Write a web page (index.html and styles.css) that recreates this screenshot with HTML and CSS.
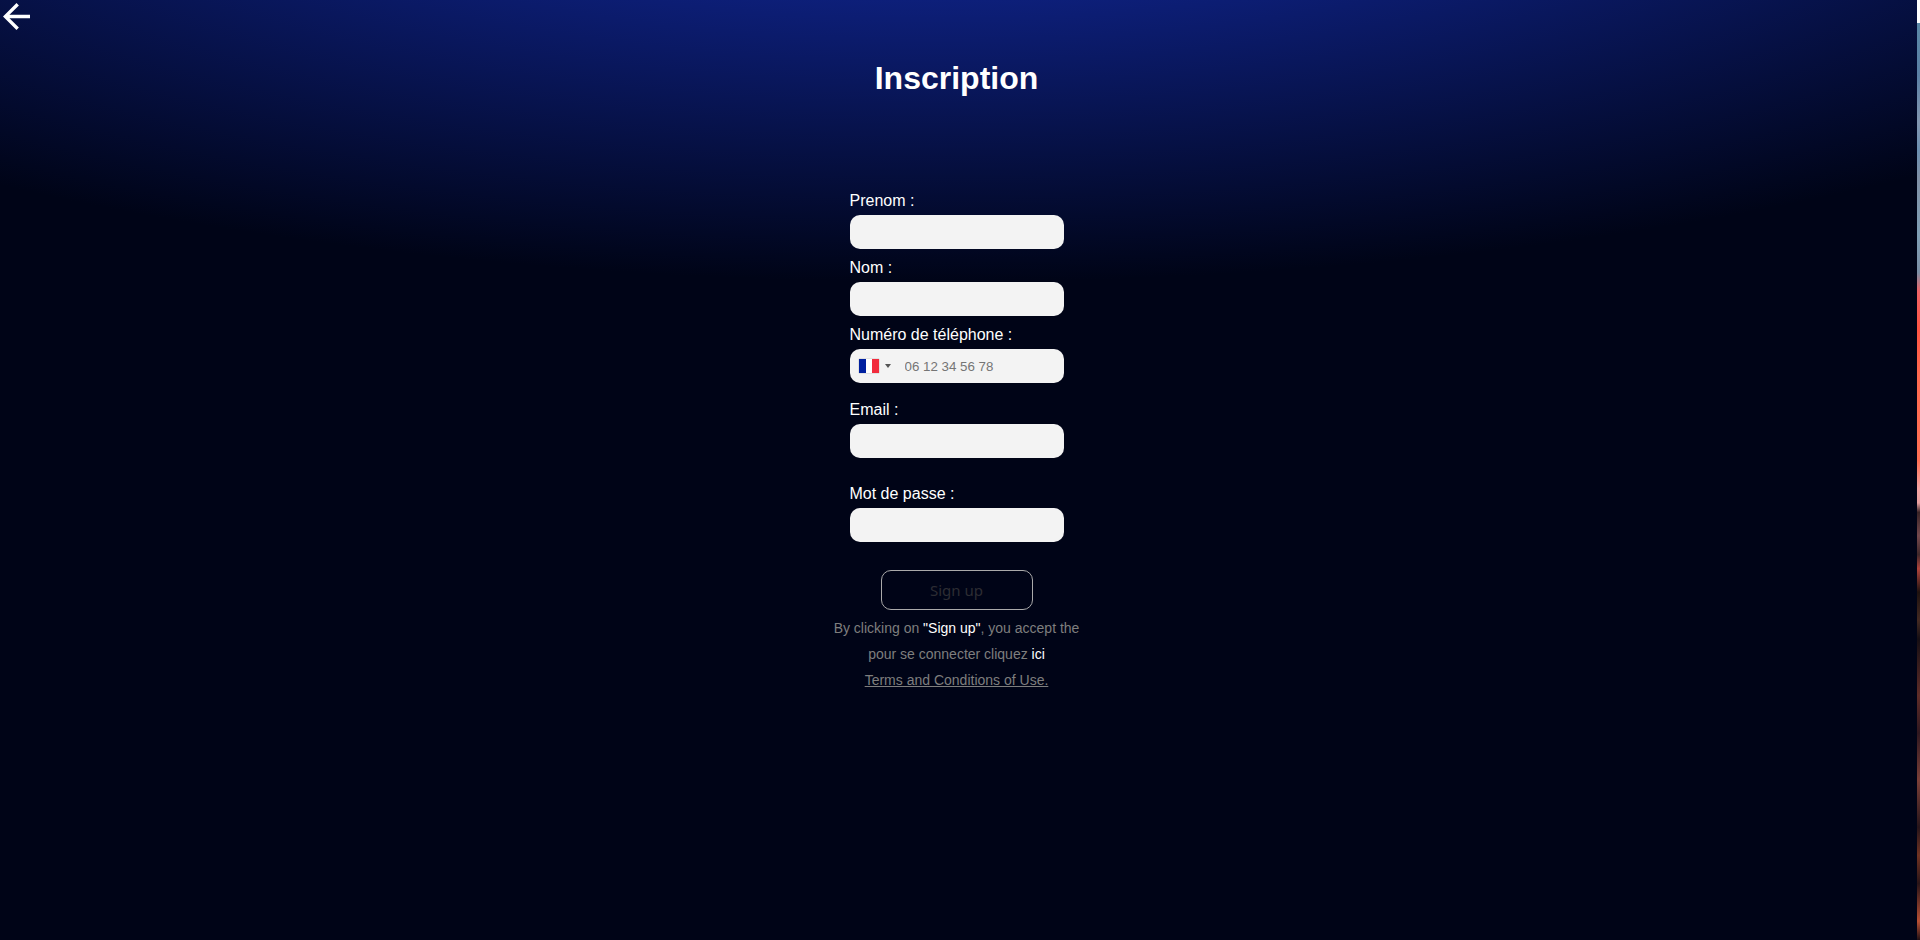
FILE: index.html
```html
<!DOCTYPE html>
<html lang="fr">
<head>
  <meta charset="utf-8">
  <title>Inscription</title>
  <link rel="stylesheet" href="styles.css">
</head>
<body>
  <div class="layout">
    <div class="panel">
      <a class="back" href="#" aria-label="Retour">
        <svg class="back-icon" viewBox="4 4 16 16" aria-hidden="true"><path fill="#fff" d="M20 11H7.83l5.59-5.59L12 4l-8 8 8 8 1.41-1.41L7.83 13H20z"/></svg>
      </a>
      <main class="content">
        <h1 class="title">Inscription</h1>
        <form class="form">
          <div class="field">
            <label class="label" for="firstname">Prenom :</label>
            <input class="input" id="firstname" type="text">
          </div>
          <div class="field">
            <label class="label" for="lastname">Nom :</label>
            <input class="input" id="lastname" type="text">
          </div>
          <div class="field field-phone">
            <label class="label" for="phone">Numéro de téléphone :</label>
            <div class="phone">
              <button class="country" type="button" aria-label="France">
                <span class="flag"></span>
                <span class="caret"></span>
              </button>
              <input class="phone-input" id="phone" type="tel" placeholder="06 12 34 56 78">
            </div>
          </div>
          <div class="field field-email">
            <label class="label" for="email">Email :</label>
            <input class="input" id="email" type="email">
          </div>
          <div class="field field-password">
            <label class="label" for="password">Mot de passe :</label>
            <input class="input" id="password" type="password">
          </div>
          <button class="submit" type="submit" disabled>Sign up</button>
        </form>
        <div class="notes">
          <p class="note">By clicking on <span class="strong">"Sign up"</span>, you accept the</p>
          <p class="note">pour se connecter cliquez <a class="strong" href="#">ici</a></p>
          <p class="note"><a class="terms" href="#">Terms and Conditions of Use.</a></p>
        </div>
      </main>
    </div>
    <div class="photo"></div>
  </div>
</body>
</html>
```

FILE: styles.css
```css
* {
  box-sizing: border-box;
}

body {
  margin: 0;
  font-family: "Liberation Sans", Arial, sans-serif;
  font-size: 16px;
  color: #fff;
  background: #000417;
}

.layout {
  display: grid;
  grid-template-columns: 1fr 3px;
  min-height: 100vh;
}

.panel {
  display: flex;
  flex-direction: column;
  background: radial-gradient(82% 52% at 49% -22%, #122a9c 0%, #0d1f7a 42%, #000417 100%);
}

.back {
  align-self: flex-start;
  padding: 3px;
}

.back-icon {
  display: block;
  width: 27px;
  height: 27px;
}

.content {
  display: flex;
  flex-direction: column;
  align-items: center;
  padding: 27px 4px 0 0;
}

.title {
  margin: 0 0 93px;
  font-size: 32px;
  line-height: 36px;
}

.form {
  display: flex;
  flex-direction: column;
  width: 214px;
}

.field {
  display: flex;
  flex-direction: column;
  gap: 2px;
  margin-bottom: 7px;
}

.field-phone {
  margin-bottom: 15px;
}

.field-email {
  margin-bottom: 24px;
}

.field-password {
  margin-bottom: 28px;
}

.label {
  line-height: 24px;
}

.input,
.phone {
  width: 100%;
  height: 34px;
  border: 0;
  border-radius: 10px;
  background: #f3f3f3;
}

.input {
  padding: 0 10px;
}

.phone {
  display: flex;
  align-items: center;
  overflow: hidden;
}

.country {
  display: flex;
  align-items: center;
  gap: 6px;
  height: 100%;
  padding: 0 14px 0 9px;
  border: 0;
  background: none;
}

.flag {
  width: 20px;
  height: 14px;
  background: linear-gradient(90deg, #00209f 0 33%, #fff 33% 66%, #f12b3c 66%);
  box-shadow: 0 0 1px #888;
}

.caret {
  border: 3px solid transparent;
  border-top: 4px solid #555;
  border-bottom: 0;
}

.phone-input {
  flex: 1;
  min-width: 0;
  height: 100%;
  padding: 0;
  border: 0;
  background: none;
  font-family: inherit;
}

.phone-input::placeholder {
  color: #757575;
}

.submit {
  align-self: center;
  width: 152px;
  height: 40px;
  border: 1px solid #aaa;
  border-radius: 10px;
  background: none;
  font-family: "Noto Sans", sans-serif;
  font-size: 15px;
  color: #2d2d33;
}

.notes {
  padding-top: 5px;
  font-size: 14px;
  line-height: 26px;
  text-align: center;
  color: #7e7e7e;
}

.note {
  margin: 0;
}

.strong {
  color: #fff;
  text-decoration: none;
}

.terms {
  color: inherit;
}

.photo {
  background: linear-gradient(#fff 0 23px, #5a88a6 23px, #5b80a5 8%, #8296b0 13%, #6b8fb0 16%, #8090a5 19%, #7f9fb5 25%, #7c8fa5 29%, #f06468 31%, #ff5544 35%, #ff6a50 40%, #ff7055 49%, #f5a5a5 52%, #e8a0a0 53.5%, #3a2426 54.5%, #75494d 57%, #40282a 59%, #b0443c 60.5%, #1f120f 63%, #442a22 66%, #160f14 68%, #602d28 74%, #301820 78%, #7c4038 83%, #27151a 88%, #713322 91%, #2a1518 94%, #b85034 98%, #201014);
}
```
